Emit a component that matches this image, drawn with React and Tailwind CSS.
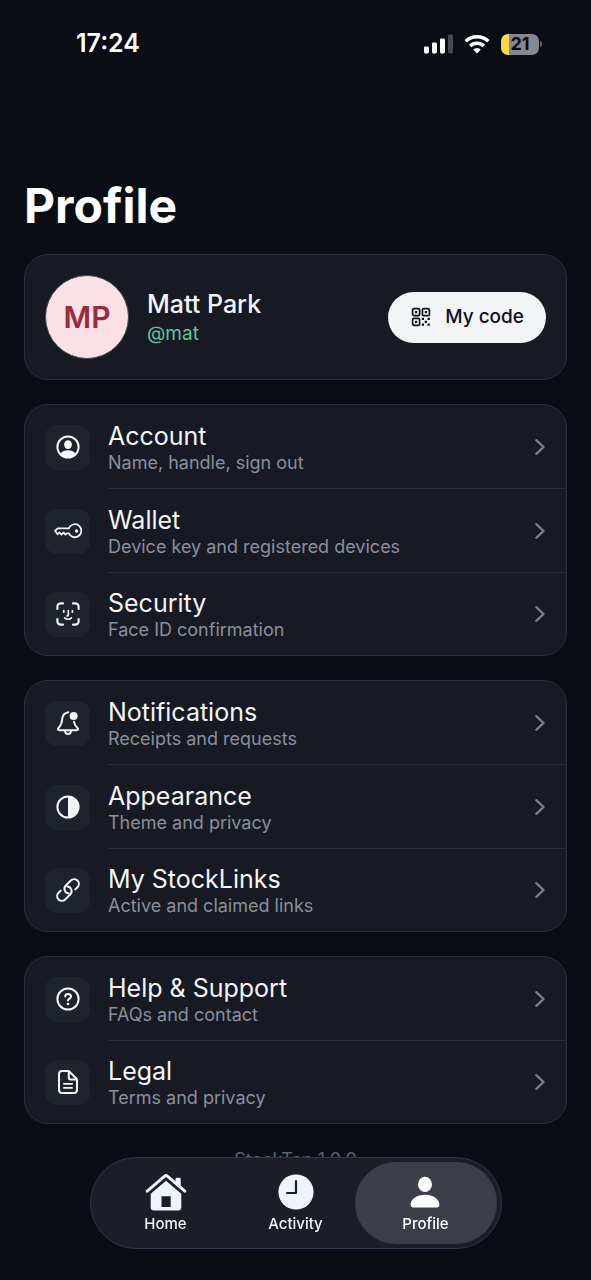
import React, { useState } from "react";

const Svg = ({ size = 24, box = 24, children, ...rest }) => (
  <svg
    width={size}
    height={size}
    viewBox={`0 0 ${box} ${box}`}
    fill="none"
    stroke="currentColor"
    strokeWidth="2"
    strokeLinecap="round"
    strokeLinejoin="round"
    aria-hidden="true"
    {...rest}
  >
    {children}
  </svg>
);

const AccountIcon = () => (
  <Svg>
    <circle cx="12" cy="12" r="10.6" />
    <ellipse cx="12" cy="9.6" rx="3.9" ry="4.4" fill="currentColor" stroke="none" />
    <path d="M4.6 18.4c1.6-2.2 4.3-3.2 7.4-3.2s5.8 1 7.4 3.2c-1.8 2.7-4.3 4.1-7.4 4.1s-5.6-1.4-7.4-4.1z" fill="currentColor" stroke="none" />
  </Svg>
);

const KeyIcon = () => (
  <Svg size={28} box={28}>
    <path d="M14.8 11.4H3.6L1 13.8l2.6 3.4 1.9-1.7 2 2.2 2-2.2 2 2 1.500-1.200h1.900a6.500 6.500 0 1 0-.1-4.900z" strokeWidth="1.800" />
    <circle cx="22.600" cy="14" r="1.700" fill="currentColor" stroke="none" />
  </Svg>
);

const FaceIcon = () => (
  <Svg strokeWidth="2.1">
    <path d="M1.4 7V4.6a3.2 3.2 0 0 1 3.2-3.2H7M17 1.4h2.4a3.2 3.2 0 0 1 3.2 3.2V7M22.6 17v2.4a3.2 3.2 0 0 1-3.2 3.2H17M7 22.6H4.6a3.2 3.2 0 0 1-3.2-3.2V17" />
    <path d="M7.8 8.5v1.7M16.4 8.5v1.7M12.3 8.5v4.2a1.2 1.2 0 0 1-1.2 1.2M8.7 15.9c1.9 1.8 4.8 1.8 6.7 0" strokeWidth="1.7" />
  </Svg>
);

const BellIcon = () => (
  <Svg>
    <path d="M12.3 1.2C8.6 1.9 6.4 4.6 6.2 8c-.2 4.3-.9 6-3.5 8.8-1.2 1.3-.9 2.4.7 2.4h17.2c1.6 0 1.9-1.1.7-2.4-2-2.1-2.9-3.6-3.3-6" />
    <path d="M9 20c.2 1.9 1.4 3 3 3s2.800-1.100 3-3" />
    <circle cx="17.600" cy="4.900" r="4" fill="currentColor" stroke="none" />
  </Svg>
);

const ContrastIcon = () => (
  <Svg>
    <circle cx="12" cy="12" r="10.6" />
    <path d="M12 1.4a10.6 10.6 0 0 1 0 21.2z" fill="currentColor" stroke="none" />
  </Svg>
);

const LinkIcon = () => (
  <Svg>
    <g transform="translate(12 12) rotate(-45)">
      <path d="M5.600 4.700H8.700A4.700 4.700 0 0 0 8.700-4.700H1.600A4.700 4.700 0 0 0-2 3" />
      <path d="M-5.600-4.700H-8.700A4.700 4.700 0 0 0-8.700 4.700H-1.600A4.700 4.700 0 0 0 2-3" />
    </g>
  </Svg>
);

const HelpIcon = () => (
  <Svg>
    <circle cx="12" cy="12" r="10.6" />
    <path d="M9.2 9.4c.1-1.6 1.3-2.5 2.9-2.5s2.9 1 2.9 2.5c0 2.2-3 2.2-3 4.2" />
    <circle cx="12" cy="17" r="1.3" fill="currentColor" stroke="none" />
  </Svg>
);

const DocIcon = () => (
  <Svg>
    <path d="M11.8 1H6a3 3 0 0 0-3 3v16a3 3 0 0 0 3 3h12a3 3 0 0 0 3-3V10.2c0-.7-.2-1.2-.7-1.7l-6.800-6.800c-.5-.5-1-.7-1.700-.7z" />
    <path d="M12.8 1.5v6.300c0 1 .6 1.600 1.600 1.600h6.200" />
    <path d="M7.800 13.900h8.400M7.800 17.900h8.400" strokeWidth="1.600" />
  </Svg>
);

const QrIcon = () => (
  <Svg size={20} box={20}>
    {[[1.6, 1.6], [11.4, 1.6], [1.6, 11.4]].map(([x, y]) => (
      <g key={`${x}-${y}`}>
        <rect x={x} y={y} width="7" height="7" rx="1.4" strokeWidth="1.7" />
        <rect x={x + 2.4} y={y + 2.4} width="2.2" height="2.2" fill="currentColor" stroke="none" />
      </g>
    ))}
    <path
      d="M10.8 10.8h2.200v2.200h-2.200zM16.600 10.800h2.200v2.200h-2.200zM13.700 13.700h2.200v2.200h-2.200zM10.800 16.600h2.200v2.200h-2.200zM16.600 16.600h2.200v2.200h-2.200z"
      fill="currentColor"
      stroke="none"
    />
  </Svg>
);

const ChevronIcon = () => (
  <svg width="12" height="18" viewBox="0 0 12 18" fill="none" aria-hidden="true">
    <path d="M2.3 2.2l7.2 6.8-7.2 6.8" stroke="currentColor" strokeWidth="2.4" strokeLinecap="round" strokeLinejoin="round" />
  </svg>
);

const HomeIcon = () => (
  <svg width="42" height="38" viewBox="0 0 42 38" fill="currentColor" aria-hidden="true">
    <path d="M30.5 11V6a1.2 1.2 0 0 1 1.2-1.2h2.8A1.2 1.2 0 0 1 35.7 6v9z" />
    <path d="M2.2 18.2L19.7 3.2a2 2 0 0 1 2.6 0L39.8 18.2" fill="none" stroke="currentColor" strokeWidth="3" strokeLinecap="round" strokeLinejoin="round" />
    <path d="M21 7.8L36.3 20.8V34.6a3 3 0 0 1-3 3H8.7a3 3 0 0 1-3-3V20.8zM16.5 23.3V34h9.200V23.300z" fillRule="evenodd" />
  </svg>
);

const ClockIcon = () => (
  <svg width="42" height="38" viewBox="0 0 42 38" fill="none" aria-hidden="true">
    <circle cx="21" cy="19" r="17.6" fill="currentColor" />
    <path d="M21 8v12h-9" stroke="#1b1e27" strokeWidth="2.2" strokeLinecap="round" strokeLinejoin="round" />
  </svg>
);

const PersonIcon = () => (
  <svg width="42" height="38" viewBox="0 0 42 38" fill="currentColor" aria-hidden="true">
    <ellipse cx="20" cy="11.4" rx="7" ry="7.7" />
    <path d="M5.6 31.6C5.6 26.5 11.5 21.7 20 21.7s14.4 4.8 14.4 9.9c0 2.1-.9 3-2.9 3h-23c-2 0-2.9-.9-2.9-3z" />
  </svg>
);

const groups = [
  [
    { title: "Account", text: "Name, handle, sign out", Icon: AccountIcon },
    { title: "Wallet", text: "Device key and registered devices", Icon: KeyIcon },
    { title: "Security", text: "Face ID confirmation", Icon: FaceIcon },
  ],
  [
    { title: "Notifications", text: "Receipts and requests", Icon: BellIcon },
    { title: "Appearance", text: "Theme and privacy", Icon: ContrastIcon },
    { title: "My StockLinks", text: "Active and claimed links", Icon: LinkIcon },
  ],
  [
    { title: "Help & Support", text: "FAQs and contact", Icon: HelpIcon },
    { title: "Legal", text: "Terms and privacy", Icon: DocIcon },
  ],
];

const tabs = [
  { name: "Home", Icon: HomeIcon },
  { name: "Activity", Icon: ClockIcon },
  { name: "Profile", Icon: PersonIcon },
];

const StatusBar = () => (
  <div className="flex h-22 items-center justify-between pr-[49px] pl-19 text-white">
    <span className="text-[25px] font-semibold">17:24</span>
    <div className="flex items-center gap-[11px]">
      <svg width="29" height="20" viewBox="0 0 29 20" fill="currentColor" aria-hidden="true">
        <rect x="0" y="12.5" width="5" height="7" rx="1.4" />
        <rect x="8" y="8.5" width="5" height="11" rx="1.4" />
        <rect x="16" y="4.5" width="5" height="15" rx="1.4" />
        <rect x="24" y="0.5" width="5" height="19" rx="1.4" opacity="0.25" />
      </svg>
      <svg width="26" height="20" viewBox="0 0 26 20" fill="none" stroke="currentColor" strokeWidth="3.6" aria-hidden="true">
        <path d="M1.7 7.3a16.2 16.2 0 0 1 22.6 0" />
        <path d="M6.2 12a9.7 9.7 0 0 1 13.6 0" />
        <path d="M13 19.4l-3.8-3.9a5.4 5.4 0 0 1 7.6 0z" fill="currentColor" stroke="none" />
      </svg>
      {/* battery */}
      <div className="flex items-center gap-px">
        <div className="flex h-[21px] w-[38px] items-center justify-center rounded-[7px] bg-linear-to-r from-[#fbd84b] from-21% to-[#87888d] to-21%">
          <span className="text-lg leading-none font-bold text-[#0b0d14]">21</span>
        </div>
        <div className="h-1.5 w-0.5 rounded-r-full bg-[#5e6066]" />
      </div>
    </div>
  </div>
);

const SettingsRow = ({ title, text, Icon, last }) => (
  <a href="#" className="flex items-stretch gap-[18px] pl-5">
    <span className="flex h-[45px] w-[45px] shrink-0 items-center justify-center self-center rounded-xl bg-[#1e232d] text-[#f3f4f6]">
      <Icon />
    </span>
    <span
      className={
        last
          ? "flex h-[82px] grow items-center justify-between pr-5 text-[#7b7f8b]"
          : "flex h-[84px] grow items-center justify-between border-b border-[#2b2f3a] pr-5 text-[#7b7f8b]"
      }
    >
      <span className="flex flex-col pt-0.5">
        <span className="text-[25px] leading-[30px] text-[#f3f4f6]">{title}</span>
        <span className="text-lg leading-6 text-[#8b8f9b]">{text}</span>
      </span>
      <ChevronIcon />
    </span>
  </a>
);

const App = () => {
  const [active, setActive] = useState("Profile");

  return (
    <div className="min-h-screen bg-[#0b0d15] pb-20 font-['Inter',sans-serif] text-[#f3f4f6]">
      <StatusBar />

      <main className="flex flex-col px-6 pt-22">
        <h1 className="text-5xl leading-[60px] font-bold text-white">Profile</h1>

        <section className="mt-[18px] flex h-[126px] items-center rounded-3xl border border-[#2a303e] bg-[#171a23] px-5">
          <div className="flex h-[84px] w-[84px] items-center justify-center rounded-full border border-[#444a59] bg-[#fbe1e5] text-3xl font-semibold text-[#992b3f]">
            MP
          </div>
          <div className="ml-[18px] grow pt-1">
            <p className="text-[25px] leading-[30px] font-medium">Matt Park</p>
            <p className="text-[19px] leading-[30px] text-[#5fc49c]">@mat</p>
          </div>
          <button className="flex h-[51px] items-center gap-3.5 rounded-full bg-[#f3f4f6] pr-[22px] pl-[23px] text-[19px] font-medium text-[#0f1119]">
            <QrIcon />
            My code
          </button>
        </section>

        {groups.map((rows) => (
          <section key={rows[0].title} className="mt-6 overflow-hidden rounded-3xl border border-[#2a303e] bg-[#171a23]">
            {rows.map((row, i) => (
              <SettingsRow key={row.title} {...row} last={i === rows.length - 1} />
            ))}
          </section>
        ))}

        <p className="mt-6 text-center text-lg leading-6 text-[#5d606b]">StockTap 1.0.0</p>
      </main>

      <nav className="fixed inset-x-0 bottom-[31px] flex justify-center">
        <div className="flex rounded-full border border-[#303749] bg-[#1b1e27] p-1">
          {tabs.map(({ name, Icon }, i) => (
            <button
              key={name}
              onClick={() => setActive(name)}
              className={`flex h-[82px] w-[142px] flex-col items-center justify-center gap-[3px] rounded-full text-[15px] leading-5 font-medium ${
                i > 0 ? "-ml-3" : ""
              } ${active === name ? "bg-[#3c3f49] text-white" : "text-[#eff3fd]"}`}
            >
              <Icon />
              {name}
            </button>
          ))}
        </div>
      </nav>
    </div>
  );
};

export default App;
